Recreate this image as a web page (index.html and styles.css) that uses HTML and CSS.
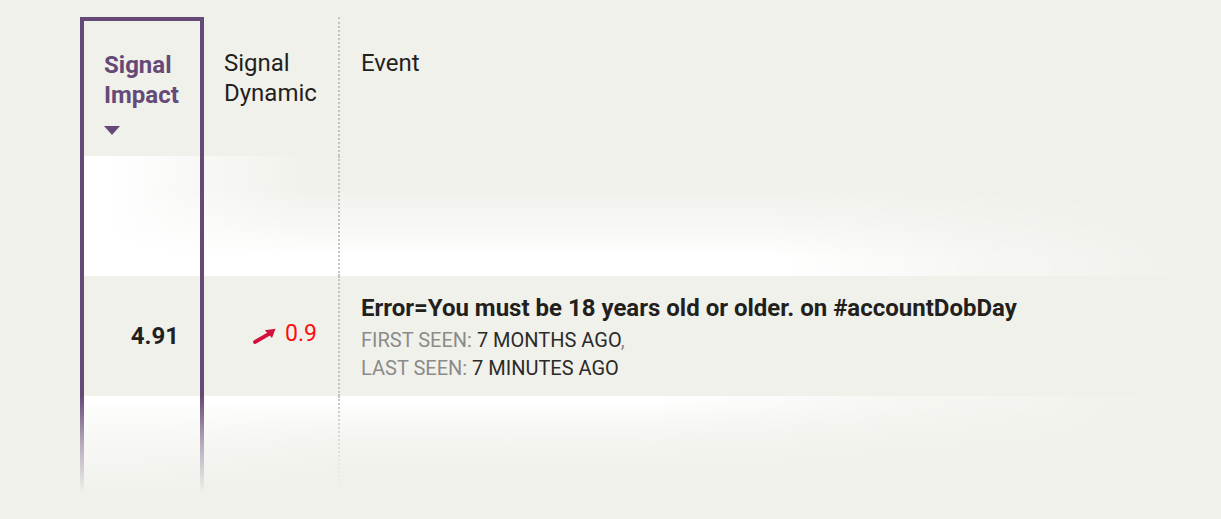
FILE: index.html
```html
<!DOCTYPE html>
<html lang="en">
<head>
<meta charset="utf-8">
<title>Signals</title>
<link rel="stylesheet" href="styles.css">
</head>
<body>
<div class="page">
  <div class="table">
    <div class="row head">
      <div class="cell c1 sel">
        <span class="hl">Signal<br>Impact</span>
        <span class="caret"></span>
      </div>
      <div class="cell c2">Signal<br>Dynamic</div>
      <div class="cell c3">Event</div>
    </div>
    <div class="row glow glow-bottom">
      <div class="cell c1 sel"></div>
      <div class="cell c2"></div>
      <div class="cell c3"></div>
    </div>
    <div class="row data">
      <div class="cell c1 sel impact">4.91</div>
      <div class="cell c2 dyn">
        <svg class="arrow" width="23" height="16" viewBox="0 0 23 16" aria-hidden="true">
          <line x1="2" y1="14" x2="16" y2="5.8" stroke="#d2113b" stroke-width="3.8" stroke-linecap="round"/>
          <polygon points="22.5,0.8 11.8,2.2 19,10" fill="#d2113b"/>
        </svg>
        <span class="num">0.9</span>
      </div>
      <div class="cell c3 event">
        <div class="title">Error=You must be 18 years old or older. on #accountDobDay</div>
        <div class="meta first"><span class="lbl">FIRST SEEN:</span> 7 MONTHS AGO<span class="lbl">,</span></div>
        <div class="meta"><span class="lbl">LAST SEEN:</span> 7 MINUTES AGO</div>
      </div>
    </div>
    <div class="row glow glow-top">
      <div class="cell c1 sel"></div>
      <div class="cell c2"></div>
      <div class="cell c3"></div>
    </div>
    <div class="fade"></div>
  </div>
</div>
</body>
</html>
```

FILE: styles.css
```css
* { box-sizing: border-box; }

html, body {
  margin: 0;
  padding: 0;
  background: #f1f1ec;
}

body {
  font-family: Roboto, "Liberation Sans", Arial, sans-serif;
  color: #231f1c;
}

.page {
  padding: 17px 21px 0 80px;
}

.table {
  position: relative;
  width: 1120px;
}

.row {
  display: grid;
  grid-template-columns: 124px 134px 1fr;
}

.cell {
  min-width: 0;
  position: relative;
  z-index: 1;
}

.c1.sel {
  border-left: 4px solid #654a78;
  border-right: 4px solid #654a78;
}

.c3 {
  border-left: 2px dotted #c4c4c2;
}

/* header */
.head {
  height: 139px;
  font-size: 24px;
  line-height: 30px;
  color: #231f1c;
}

.head .cell {
  padding: 31px 0 0 20px;
}

.head .c1.sel {
  border-top: 4px solid #654a78;
  padding-top: 29px;
  padding-left: 20px;
}

.head .c3 {
  padding-left: 21px;
}

.hl {
  display: block;
  font-weight: 700;
  color: #654a78;
}

.caret {
  display: block;
  margin-top: 16px;
  width: 0;
  height: 0;
  border-left: 8.5px solid transparent;
  border-right: 8.5px solid transparent;
  border-top: 9px solid #654a78;
}

/* empty glow rows */
.glow {
  position: relative;
}

.glow::before {
  content: "";
  position: absolute;
  inset: 0;
  z-index: 0;
}

.glow-bottom {
  height: 120px;
  background: linear-gradient(to right, #fff 30px, rgba(255,255,255,0.55) 110px, rgba(255,255,255,0) 230px);
}

.glow-bottom::before {
  background: linear-gradient(to top, #fff 18px, rgba(255,255,255,0.45) 50px, rgba(255,255,255,0) 92px);
  -webkit-mask-image: linear-gradient(to right, #000 690px, rgba(0,0,0,0.4) 900px, transparent 1120px);
  mask-image: linear-gradient(to right, #000 690px, rgba(0,0,0,0.4) 900px, transparent 1120px);
}

.glow-top {
  height: 100px;
  background: linear-gradient(to right, #fff 60px, rgba(255,255,255,0.6) 140px, rgba(255,255,255,0) 260px);
}

.glow-top::before {
  background: linear-gradient(to bottom, #fff 10px, rgba(255,255,255,0.5) 45px, rgba(255,255,255,0) 95px);
  -webkit-mask-image: linear-gradient(to right, #000 560px, rgba(0,0,0,0.4) 820px, transparent 1090px);
  mask-image: linear-gradient(to right, #000 560px, rgba(0,0,0,0.4) 820px, transparent 1090px);
}

/* data row */
.data {
  height: 120px;
}

.data .cell {
  display: flex;
  align-items: center;
}

.impact {
  justify-content: flex-end;
  padding-right: 21px;
  font-size: 24px;
  line-height: 30px;
  font-weight: 700;
  color: #231f1c;
}

.dyn {
  justify-content: flex-end;
  padding: 0 21px 4px 0;
  font-size: 23px;
  line-height: 30px;
}

.arrow {
  display: block;
  margin-right: 9px;
  margin-top: 4px;
}

.num {
  color: #ff0d0d;
}

.event {
  flex-direction: column;
  align-items: flex-start !important;
  justify-content: center;
  padding-left: 21px;
  padding-top: 3px;
}

.title {
  font-size: 24px;
  line-height: 30px;
  font-weight: 700;
  color: #231f1c;
  white-space: nowrap;
}

.meta {
  font-size: 20px;
  line-height: 28px;
  color: #2c2a28;
  text-transform: uppercase;
}

.meta.first {
  margin-top: 3px;
}

.lbl {
  color: #8b8b89;
}

/* fade-out of the last row */
.fade {
  position: absolute;
  left: 0;
  right: 0;
  bottom: 0;
  height: 100px;
  z-index: 2;
  background: linear-gradient(to bottom, rgba(241,241,236,0) 0%, rgba(241,241,236,0.6) 50%, #f1f1ec 97%);
  pointer-events: none;
}
```
